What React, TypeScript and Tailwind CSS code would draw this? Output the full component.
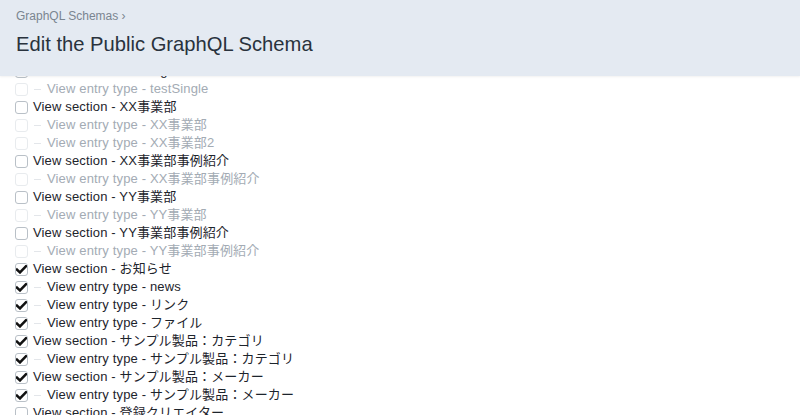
const rows: { kind: "section" | "entry"; label: string; checked?: boolean; disabled?: boolean }[] = [
  { kind: "section", label: "View section - testSingle" },
  { kind: "entry", label: "View entry type - testSingle", disabled: true },
  { kind: "section", label: "View section - XX事業部" },
  { kind: "entry", label: "View entry type - XX事業部", disabled: true },
  { kind: "entry", label: "View entry type - XX事業部2", disabled: true },
  { kind: "section", label: "View section - XX事業部事例紹介" },
  { kind: "entry", label: "View entry type - XX事業部事例紹介", disabled: true },
  { kind: "section", label: "View section - YY事業部" },
  { kind: "entry", label: "View entry type - YY事業部", disabled: true },
  { kind: "section", label: "View section - YY事業部事例紹介" },
  { kind: "entry", label: "View entry type - YY事業部事例紹介", disabled: true },
  { kind: "section", label: "View section - お知らせ", checked: true },
  { kind: "entry", label: "View entry type - news", checked: true },
  { kind: "entry", label: "View entry type - リンク", checked: true },
  { kind: "entry", label: "View entry type - ファイル", checked: true },
  { kind: "section", label: "View section - サンプル製品：カテゴリ", checked: true },
  { kind: "entry", label: "View entry type - サンプル製品：カテゴリ", checked: true },
  { kind: "section", label: "View section - サンプル製品：メーカー", checked: true },
  { kind: "entry", label: "View entry type - サンプル製品：メーカー", checked: true },
  { kind: "section", label: "View section - 登録クリエイター" },
];

const Checkbox = ({ checked, disabled }: { checked?: boolean; disabled?: boolean }) => (
  <span
    className={`flex h-[13px] w-[13px] shrink-0 items-center justify-center rounded-[3px] border bg-white ${
      disabled ? "border-[#e8ebee]" : "border-[#b9c0c7]"
    }`}
  >
    {checked && (
      <svg width="11" height="9" viewBox="0 0 11 9">
        <path d="M1 4.6 L4 7.4 L10 1.2" fill="none" stroke="#111" strokeWidth="2.5" strokeLinecap="square" />
      </svg>
    )}
  </span>
);

export default function App() {
  return (
    <div className="h-[415px] w-[800px] overflow-hidden bg-white font-['Liberation_Sans','Noto_Sans_CJK_JP',sans-serif]">
      {/* Header */}
      <header className="relative z-10 h-[76px] bg-[#e4eaf2] px-4 pt-[8px] shadow-[0_1px_2px_rgba(0,0,0,0.06)]">
        <div className="text-[12px] leading-[16px] text-[#7a8590]">GraphQL Schemas ›</div>
        <h1 className="mt-[7px] text-[20.2px] leading-[26px] text-[#29323d]">Edit the Public GraphQL Schema</h1>
      </header>

      {/* Permissions list */}
      <ul className="-mt-[14px] pl-[15px]">
        {rows.map((row, i) => (
          <li key={i} className="flex h-[18px] items-center text-[13px] tracking-[0.15px]">
            <Checkbox checked={row.checked} disabled={row.disabled} />
            {row.kind === "entry" ? (
              <>
                <span className="ml-[6px] mr-[6px] h-px w-[7px] bg-[#e3e6ea]" />
                <span className={row.disabled ? "text-[#a3abb4]" : "text-[#1d242c]"}>{row.label}</span>
              </>
            ) : (
              <span className="ml-[5px] text-[#1d242c]">{row.label}</span>
            )}
          </li>
        ))}
      </ul>
    </div>
  );
}
